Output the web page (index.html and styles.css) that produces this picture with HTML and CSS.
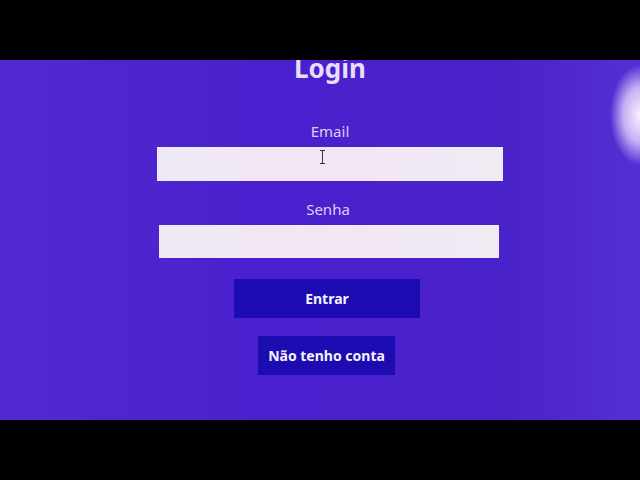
FILE: index.html
```html
<!DOCTYPE html>
<html lang="pt">
<head>
<meta charset="utf-8">
<title>Login</title>
<link rel="stylesheet" href="styles.css">
</head>
<body>
<div class="screen">
  <form class="login">
    <h1 class="title">Login</h1>
    <label class="label label-email" for="email">Email</label>
    <div class="field">
      <input class="input input-email" id="email" type="text">
      <svg class="cursor" width="7" height="14" viewBox="0 0 7 14"><path d="M1 0.5h5M3.5 0.5v13M1 13.5h5" stroke="#333" stroke-width="1" fill="none"/></svg>
    </div>
    <label class="label label-senha" for="senha">Senha</label>
    <input class="input input-senha" id="senha" type="password">
    <button class="btn btn-entrar" type="button">Entrar</button>
    <button class="btn btn-conta" type="button">Não tenho conta</button>
  </form>
</div>
</body>
</html>
```
FILE: styles.css
```css
html, body {
  margin: 0;
  padding: 0;
  background: #000;
  width: 640px;
  height: 480px;
  overflow: hidden;
}
.screen {
  margin-top: 60px;
  height: 360px;
  overflow: hidden;
  background:
    radial-gradient(ellipse 30px 50px at 640px 55px, rgba(255,248,255,0.97), rgba(235,220,255,0.75) 55%, rgba(120,90,230,0) 100%),
    linear-gradient(90deg, #5128d2 0%, #4a20ce 45%, #4a22ca 80%, #5430d4 100%);
  font-family: "Noto Sans", "Open Sans", sans-serif;
}
.login {
  display: flex;
  flex-direction: column;
  align-items: center;
  padding-left: 20px;
}
.title {
  margin: -5px 0 0 0;
  font-size: 26px;
  line-height: 26px;
  font-weight: 700;
  color: #e6defa;
}
.label {
  display: block;
  font-size: 15px;
  line-height: 18px;
  color: #d9d0f5;
}
.label-email { margin-top: 41px; }
.label-senha { margin-top: 19px; margin-left: -4px; }
.field {
  position: relative;
  margin-top: 7px;
}
.input {
  display: block;
  box-sizing: border-box;
  border: none;
  padding: 0;
  margin: 0;
  background: linear-gradient(90deg, #eeeaf4 0%, #f3e6f5 40%, #efebf3 100%);
  outline: none;
}
.input-email {
  width: 346px;
  height: 34px;
}
.input-senha {
  width: 340px;
  height: 33px;
  margin-top: 7px;
  margin-left: -2px;
}
.cursor {
  position: absolute;
  left: 162px;
  top: 3px;
}
.btn {
  border: none;
  margin: 0;
  background: #1d0cb2;
  color: #f4f2ff;
  font-family: "Noto Sans", "Open Sans", sans-serif;
  font-weight: 700;
  font-size: 14px;
  height: 39px;
  box-sizing: border-box;
}
.btn-entrar {
  width: 186px;
  margin-top: 21px;
  margin-left: -6px;
}
.btn-conta {
  padding: 0 10px;
  margin-top: 18px;
  margin-left: -7px;
}
```
